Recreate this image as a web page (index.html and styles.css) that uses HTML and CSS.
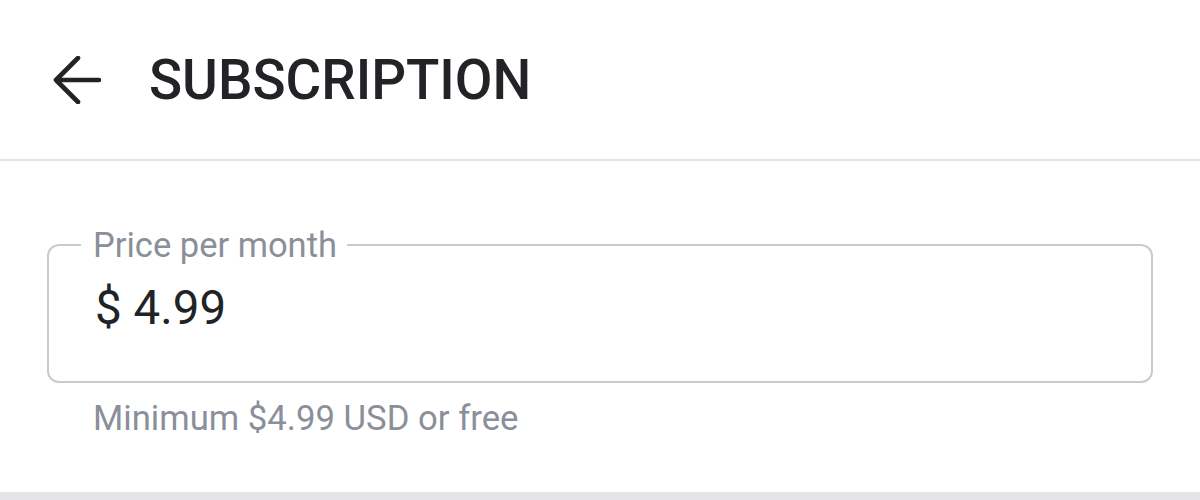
FILE: index.html
```html
<!DOCTYPE html>
<html>
<head>
<meta charset="utf-8">
<link rel="stylesheet" href="styles.css">
</head>
<body>
<div class="page">
  <header class="topbar">
    <svg class="back" width="48" height="48" viewBox="0 0 48 48">
      <path d="M46 24H3M25 2L3 24L25 46" fill="none" stroke="#222326" stroke-width="4.6" stroke-linecap="round" stroke-linejoin="round"/>
    </svg>
    <h1 class="title">SUBSCRIPTION</h1>
  </header>
  <main class="content">
    <fieldset class="field">
      <legend class="label">Price per month</legend>
      <div class="value">$ 4.99</div>
    </fieldset>
    <div class="helper">Minimum $4.99 USD or free</div>
  </main>
  <div class="bottom-line"></div>
</div>
</body>
</html>
```
FILE: styles.css
```css
* { box-sizing: border-box; }
html, body { margin: 0; padding: 0; background: #ffffff; }
body { font-family: Roboto, "Noto Sans", sans-serif; width: 1200px; height: 500px; overflow: hidden; }
.page { display: flex; flex-direction: column; height: 500px; }
.topbar {
  height: 161px;
  display: flex;
  align-items: center;
  padding-left: 53px;
  border-bottom: 2px solid #e4e4e8;
  flex: none;
}
.back { flex: none; width: 48px; height: 48px; }
.title {
  margin: 0 0 0 48px;
  font-size: 54.7px;
  line-height: 54px;
  font-weight: 500;
  color: #222326;
}
.content { padding: 0 47px; flex: 1; }
.field {
  margin: 66px 0 0 0;
  padding: 0 0 0 46px;
  height: 156px;
  border: 2px solid #c9cacd;
  border-radius: 12px;
  min-width: 0;
}
.label {
  margin-left: -14px;
  padding: 0 10px 0 12px;
  font-size: 34.5px;
  color: #8a8f9a;
  line-height: 36px;
}
.value {
  margin-top: 17px;
  font-size: 47.5px;
  color: #222326;
  line-height: 56px;
}
.helper {
  margin: 15px 0 0 46px;
  font-size: 34.7px;
  color: #8a8f9a;
  line-height: 40px;
}
.bottom-line { height: 8px; background: #e4e4e8; flex: none; }
```
